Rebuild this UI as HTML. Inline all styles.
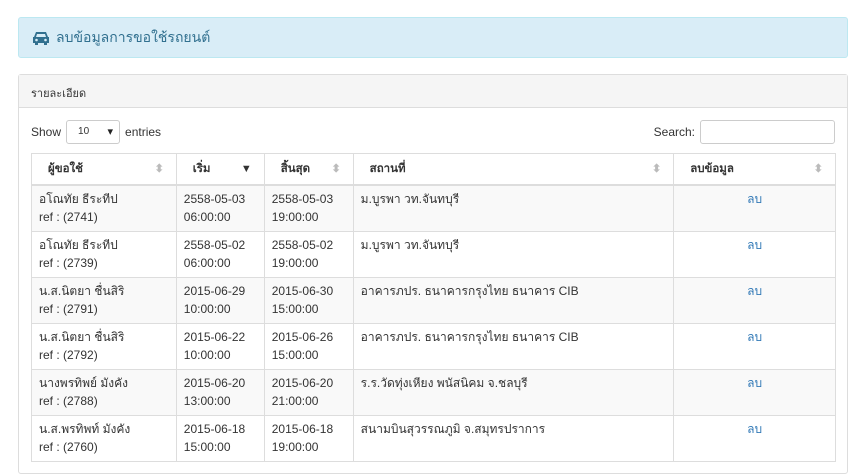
<!DOCTYPE html>
<html><head><meta charset="utf-8"><style>
*{box-sizing:border-box}
body{margin:0;width:849px;height:458px;overflow:hidden;background:#fff;font-family:"Liberation Sans","Noto Sans CJK SC",sans-serif;font-size:12px;color:#333}
.alert{position:absolute;left:18px;top:17px;width:830px;height:41px;background:#d9edf7;border:1px solid #bce8f1;border-radius:3px;color:#31708f;font-size:14px;padding:10px 13px;display:flex;align-items:center;gap:6px}
.panel{position:absolute;left:18px;top:74px;width:830px;height:400px;border:1px solid #ddd;border-radius:3px}
.ph{height:33px;background:#f5f5f5;border-bottom:1px solid #ddd;padding:9px 12px;font-size:11px}
.show{position:absolute;left:12px;top:45px;display:flex;align-items:center;gap:5px}
.sel{width:54px;height:24px;border:1px solid #ccc;border-radius:3px;font-size:10px;padding:5px 11px;position:relative}
.sel:after{content:"▾";position:absolute;right:6px;top:4px;font-size:11px;color:#222}
.search{position:absolute;right:12px;top:45px;display:flex;align-items:center;gap:5px}
.search div{width:135px;height:24px;border:1px solid #ccc;border-radius:3px}
table{position:absolute;left:12px;top:78px;width:805px;border-collapse:collapse}
td,th{border:1px solid #ddd;text-align:left;vertical-align:top;padding:7px 7px;line-height:18px}
th{height:31px;border-bottom:2px solid #ddd;padding:6px 16px;position:relative;font-weight:bold;font-size:11.5px}
th .s{position:absolute;right:12px;top:6px;color:#bbb;font-size:11px}
td{height:46px;padding:4px 7px}
tbody tr:nth-child(odd){background:#f9f9f9}
td.c{text-align:center;color:#337ab7}
</style></head><body>
<div class="alert"><svg width="18" height="14" viewBox="0 0 18 14"><path d="M4 1h10l2 5h1v6h-2v2h-3v-2H6v2H3v-2H1V6h1z" fill="#31708f"/><path d="M5 3h8l1 3H4z" fill="#d9edf7"/><circle cx="4.5" cy="9" r="1.3" fill="#d9edf7"/><circle cx="13.5" cy="9" r="1.3" fill="#d9edf7"/></svg>ลบข้อมูลการขอใช้รถยนต์</div>
<div class="panel">
<div class="ph">รายละเอียด</div>
<div class="show">Show <div class="sel">10</div> entries</div>
<div class="search">Search: <div></div></div>
<table>
<colgroup><col style="width:145px"><col style="width:88px"><col style="width:89px"><col style="width:321px"><col style="width:162px"></colgroup>
<thead><tr><th>ผู้ขอใช้<span class="s">⬍</span></th><th>เริ่ม<span class="s" style="color:#333">▼</span></th><th>สิ้นสุด<span class="s">⬍</span></th><th>สถานที่<span class="s">⬍</span></th><th>ลบข้อมูล<span class="s">⬍</span></th></tr></thead>
<tbody>
<tr><td>อโณทัย ธีระทีป<br>ref : (2741)</td><td>2558-05-03<br>06:00:00</td><td>2558-05-03<br>19:00:00</td><td>ม.บูรพา วท.จันทบุรี</td><td class="c">ลบ</td></tr>
<tr><td>อโณทัย ธีระทีป<br>ref : (2739)</td><td>2558-05-02<br>06:00:00</td><td>2558-05-02<br>19:00:00</td><td>ม.บูรพา วท.จันทบุรี</td><td class="c">ลบ</td></tr>
<tr><td>น.ส.นิตยา ชื่นสิริ<br>ref : (2791)</td><td>2015-06-29<br>10:00:00</td><td>2015-06-30<br>15:00:00</td><td>อาคารภปร. ธนาคารกรุงไทย ธนาคาร CIB</td><td class="c">ลบ</td></tr>
<tr><td>น.ส.นิตยา ชื่นสิริ<br>ref : (2792)</td><td>2015-06-22<br>10:00:00</td><td>2015-06-26<br>15:00:00</td><td>อาคารภปร. ธนาคารกรุงไทย ธนาคาร CIB</td><td class="c">ลบ</td></tr>
<tr><td>นางพรทิพย์ มังคัง<br>ref : (2788)</td><td>2015-06-20<br>13:00:00</td><td>2015-06-20<br>21:00:00</td><td>ร.ร.วัดทุ่งเหียง พนัสนิคม จ.ชลบุรี</td><td class="c">ลบ</td></tr>
<tr><td>น.ส.พรทิพท์ มังคัง<br>ref : (2760)</td><td>2015-06-18<br>15:00:00</td><td>2015-06-18<br>19:00:00</td><td>สนามบินสุวรรณภูมิ จ.สมุทรปราการ</td><td class="c">ลบ</td></tr>
</tbody></table>
</div>
</body></html>
